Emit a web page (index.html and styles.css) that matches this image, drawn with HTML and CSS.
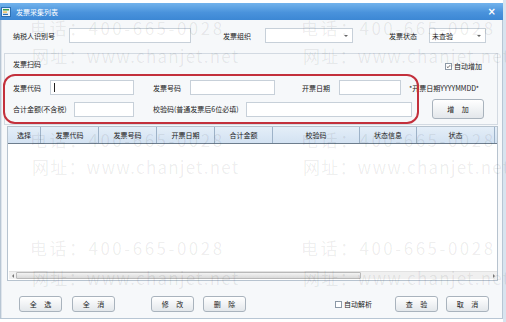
FILE: index.html
```html
<!DOCTYPE html>
<html>
<head>
<meta charset="utf-8">
<link rel="stylesheet" href="styles.css">
</head>
<body>
<div class="screen">
  <div class="window">
    <div class="titlebar">
      <svg class="ticon" width="10" height="10" viewBox="0 0 10 10">
        <rect x="0.5" y="0.5" width="9" height="9" fill="#e8f2fb" stroke="#2c6fb3"/>
        <rect x="2" y="2" width="6" height="1.5" fill="#3aa04a"/>
        <rect x="2" y="4.5" width="4" height="1.2" fill="#f2b233"/>
        <rect x="2" y="6.8" width="5" height="1.2" fill="#2c6fb3"/>
      </svg>
      <span class="ttext">发票采集列表</span>
      <span class="close">×</span>
    </div>
    <div class="content">
      <div class="row1">
        <span class="lab w56">纳税人识别号</span>
        <div class="field w122"></div>
        <span class="lab w42 ml32">发票组织</span>
        <div class="field sel w88"><span></span><i class="arrow"></i></div>
        <span class="lab w40 ml36">发票状态</span>
        <div class="field sel w57"><span>未查验</span><i class="arrow"></i></div>
      </div>

      <div class="group">
        <div class="ghead">
          <span class="lab">发票扫码</span>
          <label class="chk"><span class="cbox on"><svg width="7" height="7" viewBox="0 0 7 7"><path d="M1.2 3.6 L2.8 5.2 L5.8 1.6" fill="none" stroke="#333" stroke-width="1"/></svg></span>自动增加</label>
        </div>
        <div class="grow ga">
          <span class="lab w37">发票代码</span>
          <div class="field w84 caret"><i></i></div>
          <span class="lab w37 ml19">发票号码</span>
          <div class="field w85"></div>
          <span class="lab w37 ml27">开票日期</span>
          <div class="field w62"></div>
          <span class="hint">*开票日期YYYYMMDD*</span>
        </div>
        <div class="grow gb">
          <span class="lab w61">合计金额(不含税)</span>
          <div class="field w60"></div>
          <span class="lab w93 ml19">校验码(普通发票后6位必填)</span>
          <div class="field w166"></div>
          <button class="btn add">增 加</button>
        </div>
      </div>

      <div class="table">
        <div class="thead">
          <span class="c1">选择</span>
          <span class="c2">发票代码</span>
          <span class="c3">发票号码</span>
          <span class="c4">开票日期</span>
          <span class="c5">合计金额</span>
          <span class="c6">校验码</span>
          <span class="c7">状态信息</span>
          <span class="c8">状态</span>
        </div>
        <div class="tbody"></div>
        <div class="hscroll">
          <span class="sarrow left"></span>
          <div class="strack"><div class="sthumb"></div></div>
          <span class="sarrow right"></span>
        </div>
      </div>

      <div class="actions">
        <button class="btn">全 选</button>
        <button class="btn ml10">全 消</button>
        <button class="btn ml36">修 改</button>
        <button class="btn ml9">删 除</button>
        <label class="chk ml89"><span class="cbox"></span>自动解析</label>
        <button class="btn ml23">查 验</button>
        <button class="btn ml8">取 消</button>
      </div>
    </div>
  </div>

  <div class="scanmark"></div>

  <div class="wm" style="left:30px;top:19px">电话：400-665-0028</div>
  <div class="wm" style="left:301px;top:19px">电话：400-665-0028</div>
  <div class="wm web" style="left:32px;top:47px">网址：www.chanjet.net</div>
  <div class="wm web" style="left:303px;top:47px">网址：www.chanjet.net</div>
  <div class="wm" style="left:30px;top:131px">电话：400-665-0028</div>
  <div class="wm" style="left:301px;top:131px">电话：400-665-0028</div>
  <div class="wm web" style="left:32px;top:158px">网址：www.chanjet.net</div>
  <div class="wm web" style="left:303px;top:158px">网址：www.chanjet.net</div>
  <div class="wm" style="left:30px;top:239px">电话：400-665-0028</div>
  <div class="wm" style="left:301px;top:239px">电话：400-665-0028</div>
  <div class="wm web" style="left:32px;top:269px">网址：www.chanjet.net</div>
  <div class="wm web" style="left:303px;top:269px">网址：www.chanjet.net</div>
</div>
</body>
</html>
```

FILE: styles.css
```css
* { box-sizing: border-box; }
html, body { margin: 0; padding: 0; }
body {
  background: #fff;
  font-family: "Noto Sans CJK SC", "Noto Sans", sans-serif;
  font-size: 7px;
  color: #222;
}
.screen {
  position: relative;
  width: 506px;
  height: 322px;
  overflow: hidden;
  background:
    linear-gradient(90deg, transparent 0 503px, #d8e4ef 503px);
}
.window {
  margin-top: 3px;
  width: 503px;
  height: 316px;
  display: flex;
  flex-direction: column;
  background: #f6f8fa;
  border: 1px solid #b8c6d4;
  border-top: none;
}
.titlebar {
  height: 17px;
  flex: none;
  display: flex;
  align-items: center;
  padding-left: 1px;
  background: linear-gradient(#72b3ec, #4a93dc 55%, #3c87d4);
  color: #fff;
  margin: 0 -1px;
}
.ticon { flex: none; margin-top: 1px; }
.ttext { margin-left: 5px; font-size: 7px; flex: 1; }
.close {
  font-family: "DejaVu Sans", sans-serif;
  font-size: 10px;
  font-weight: bold;
  margin-right: 7px;
  line-height: 10px;
}
.content {
  flex: 1;
  display: flex;
  flex-direction: column;
  padding: 8px 0 0 2px;
  border-left: 1px solid #dfe5ec;
}
.lab { white-space: nowrap; flex: none; }
.w37 { width: 37px; } .w40 { width: 40px; } .w42 { width: 42px; }
.w56 { width: 56px; } .w57 { width: 57px; } .w60 { width: 60px; }
.w61 { width: 61px; } .w62 { width: 62px; } .w84 { width: 84px; }
.w85 { width: 85px; } .w88 { width: 88px; } .w93 { width: 93px; }
.w122 { width: 122px; } .w166 { width: 166px; }
.ml8 { margin-left: 8px; } .ml9 { margin-left: 9px; } .ml10 { margin-left: 10px; }
.ml19 { margin-left: 19px; } .ml23 { margin-left: 23px; } .ml27 { margin-left: 27px; }
.ml32 { margin-left: 32px; } .ml36 { margin-left: 36px; } .ml89 { margin-left: 89px; }

.row1 {
  display: flex;
  align-items: center;
  height: 15px;
  padding-left: 9px;
}
.field {
  flex: none;
  height: 15px;
  background: #fff;
  border: 1px solid #c7d0d9;
  display: flex;
  align-items: center;
  padding-left: 2px;
}
.sel { justify-content: space-between; padding-right: 4px; }
.arrow {
  width: 0; height: 0;
  border-left: 2px solid transparent;
  border-right: 2px solid transparent;
  border-top: 2px solid #666;
}
.caret i { display: block; width: 1px; height: 9px; background: #222; margin-left: 1px; }

.group {
  margin-top: 10px;
  width: 494px;
  height: 72px;
  border: 1px solid #d3dae2;
  padding: 4px 0 0 8px;
  display: flex;
  flex-direction: column;
}
.ghead {
  height: 12px;
  display: flex;
  align-items: center;
  justify-content: space-between;
  padding-right: 15px;
}
.ghead .chk { margin-top: 4px; }
.chk { display: flex; align-items: center; white-space: nowrap; }
.cbox {
  width: 7px; height: 7px;
  border: 1px solid #8c99a6;
  background: #fff;
  margin-right: 2px;
  display: flex; align-items: center; justify-content: center;
}
.cbox svg { display: block; }
.grow { display: flex; align-items: center; }
.ga { margin-top: 10px; height: 15px; }
.gb { margin-top: 4px; height: 20px; }
.hint { margin-left: 8px; white-space: nowrap; }

.btn {
  flex: none;
  width: 43px;
  height: 16px;
  padding: 0;
  font-family: inherit;
  font-size: 7px;
  color: #222;
  letter-spacing: 3px;
  text-indent: 3px;
  border: 1px solid #a9b3bd;
  border-radius: 3px;
  background: linear-gradient(#ffffff, #f1f3f5 50%, #e3e7eb);
}
.add { width: 52px; height: 20px; margin-left: 20px; }

.table {
  margin-top: 1px;
  margin-left: 3px;
  width: 491px;
  height: 155px;
  border: 1px solid #b7c3cf;
  display: flex;
  flex-direction: column;
  background: #fff;
}
.thead {
  height: 17px;
  flex: none;
  display: flex;
  background: linear-gradient(#e4eef8, #d3e2f2);
  border-bottom: 1px solid #6d7d8d;
}
.thead span {
  display: flex;
  align-items: center;
  justify-content: center;
  border-right: 1px solid #9db2c8;
  flex: none;
}
.c1 { width: 33px; } .c2 { width: 58px; } .c3 { width: 58px; } .c4 { width: 58px; }
.c5 { width: 58px; } .c6 { width: 87px; } .c7 { width: 57px; } .c8 { width: 78px; }
.tbody { flex: 1; }
.hscroll {
  height: 8px;
  flex: none;
  display: flex;
  align-items: center;
  margin: 0 0 1px 1px;
  background: #f0f0f0;
  border-top: 1px solid #e2e2e2;
}
.sarrow { width: 7px; height: 7px; display: flex; align-items: center; justify-content: center; }
.sarrow.left::before {
  content: ""; border-top: 2px solid transparent; border-bottom: 2px solid transparent; border-right: 2px solid #777;
}
.sarrow.right::before {
  content: ""; border-top: 2px solid transparent; border-bottom: 2px solid transparent; border-left: 2px solid #777;
}
.strack { flex: 1; height: 7px; }
.sthumb {
  width: 345px; height: 7px;
  border: 1px solid #b9b9b9;
  border-radius: 1px;
  background: linear-gradient(#f4f4f4, #d9d9d9);
}

.actions {
  margin-top: 15px;
  padding-left: 15px;
  display: flex;
  align-items: center;
  height: 16px;
}

.scanmark {
  position: absolute;
  left: 3px;
  top: 74px;
  width: 416px;
  height: 50px;
  border: 2px solid #c3303c;
  border-radius: 12px;
  pointer-events: none;
}
.wm {
  position: absolute;
  font-family: "Noto Sans CJK SC", sans-serif;
  font-size: 17px;
  line-height: 17px;
  letter-spacing: 2.5px;
  color: rgba(0, 0, 0, 0.075);
  white-space: nowrap;
  pointer-events: none;
}
.wm.web { letter-spacing: 1.2px; }
```
